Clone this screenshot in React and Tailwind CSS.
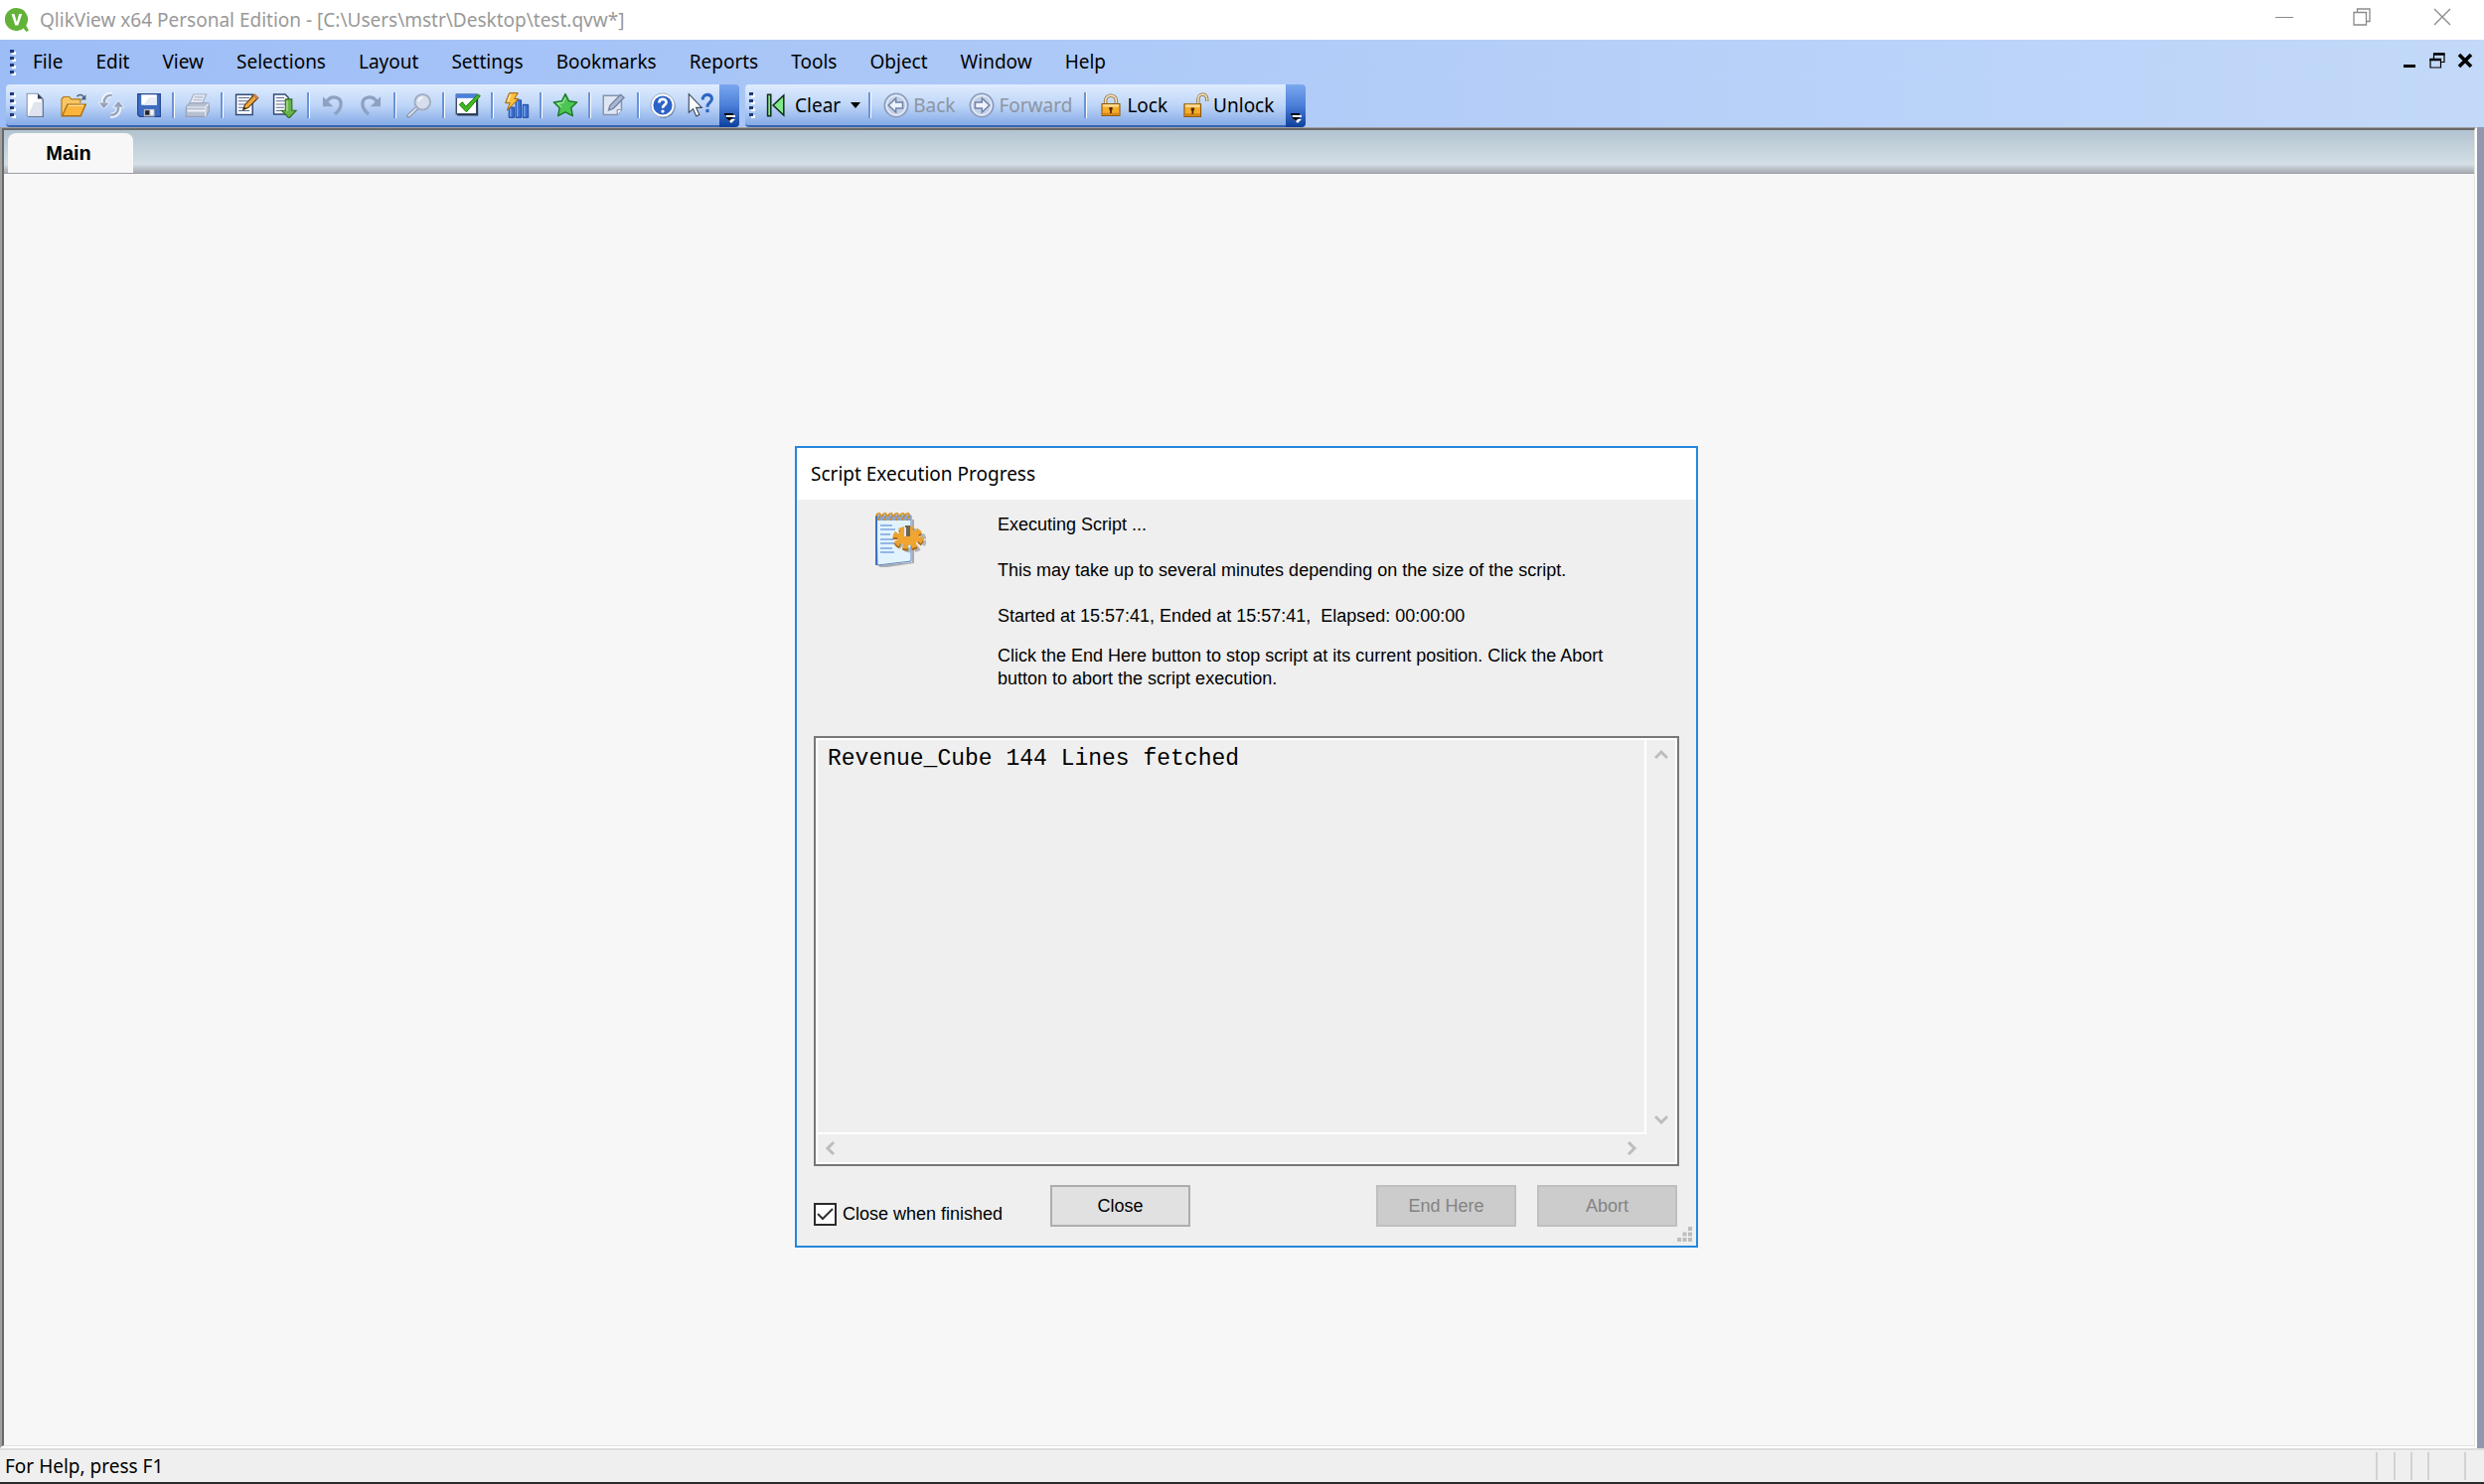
import { useState } from 'react';

const menus = [
  'File', 'Edit', 'View', 'Selections', 'Layout', 'Settings',
  'Bookmarks', 'Reports', 'Tools', 'Object', 'Window', 'Help',
];

function Icon({ children, className = 'w-[26px] h-[26px]' }) {
  return (
    <svg viewBox="0 0 16 16" className={`${className} shrink-0`} fill="none" aria-hidden="true">
      {children}
    </svg>
  );
}

const icons = {
  new: (
    <>
      <path d="M3.2 1h6.3l3.4 3.4V15.4H3.2z" fill="#4b5a78" />
      <path d="M2.6 .8h6.6l3 3V14.8H2.6z" fill="#fff" stroke="#8c9ab5" strokeWidth=".7" />
      <path d="M7 6h5v8.6H3z" fill="#dfe4ee" />
      <path d="M9.2 .8v3.2h3.2z" fill="#2f3c58" />
    </>
  ),
  open: (
    <>
      <path d="M.6 14.4V4.2l1.2-1.4h3.6l1.2 1.4h5.6v2.4" fill="#f7c765" stroke="#b07818" strokeWidth=".7" />
      <path d="M1 14.6 4.2 7.4h11.4l-3.2 7.2z" fill="#fbb53c" stroke="#a86d10" strokeWidth=".8" />
      <path d="M4.8 8.2h9.4" stroke="#ffe3a0" strokeWidth=".8" />
      <path d="M10.2 2.6C11.4 1 13.4 1.2 14.4 3" stroke="#4d6282" strokeWidth="1" />
      <path d="M15.6 1.4v3.2h-3.2z" fill="#4d6282" />
    </>
  ),
  reload: (
    <>
      <path d="M8.4 1.6C5 1 3.4 3.4 3.4 5.8M7.6 14.2c3.4.4 5-2 5-4.6" stroke="#eef3fb" strokeWidth="3.4" />
      <path d="M3.4 10.4 0 6.2h7z M12.4 5 16 9.4H9z" fill="#96a3ba" stroke="#eef3fb" strokeWidth=".6" />
      <path d="M8.4 1.8C5.4 1.6 3.6 3.4 3.6 6.4M7.6 14c3 .2 4.8-1.8 4.8-4.8" stroke="#96a3ba" strokeWidth="1.5" />
    </>
  ),
  save: (
    <>
      <path d="M1 1h14v14H2.2L1 13.8z" fill="#3d6cc0" stroke="#24478f" strokeWidth=".7" />
      <path d="M3.2 1.4h9.6v6.4H3.2z" fill="#fff" />
      <path d="M8 3h4.8v4.8H4.6z" fill="#e6ecf7" />
      <path d="M4.8 10.4h6.6V15H4.8z" fill="#b9bcc4" />
      <path d="M5.6 11.2h2.6V14H5.6z" fill="#1c2438" />
      <path d="M8.8 10.8h2V14h-2z" fill="#f4f4f4" />
    </>
  ),
  print: (
    <>
      <path d="M5.4 1.2h8l-2.6 5.6H3z" fill="#e8ecf4" stroke="#a3aec2" strokeWidth=".7" />
      <path d="M6 3h5.4M5.2 4.8h5.4" stroke="#a9b3c6" strokeWidth=".7" />
      <path d="M.8 9 3 6.6h12v5L13 15H.8z" fill="#b8c1d2" stroke="#94a1b9" strokeWidth=".7" />
      <path d="M1.2 9.2h11.6l2-2.4M12.8 9.2V15" stroke="#eaeff7" strokeWidth=".7" />
      <path d="M1.6 11.4h11" stroke="#f2f5fa" strokeWidth="1.1" />
    </>
  ),
  script: (
    <>
      <path d="M1.6 1.4h10.2v12.4H1.6z" fill="#fff" stroke="#2f4878" strokeWidth=".9" />
      <path d="M3 3.4h7M3 5.4h6M3 7.4h5M3 9.4h4M3 11.4h7" stroke="#56698f" strokeWidth=".7" />
      <path d="M6 10.6 7 7.8 12.8 1.4 15.2 3.4 9 9.6z" fill="#f0a83a" stroke="#573510" strokeWidth=".7" />
      <path d="m12 2.2 2.4 2 1-1L13.4.8z" fill="#c87f45" />
      <path d="m6 10.8.6-1.8 1.3 1.1z" fill="#18120c" />
    </>
  ),
  table: (
    <>
      <path d="M1.6 1.2h7l2 2v10.4h-9z" fill="#fff" stroke="#2f4878" strokeWidth=".9" />
      <path d="M3 3.4h5M3 5.4h6M3 7.4h6M3 9.4h5M3 11.4h5" stroke="#56698f" strokeWidth=".7" />
      <path d="M8.8 4.2h4v7h2.8L11 16 6.4 11.2h2.4z" fill="#66b447" stroke="#356b22" strokeWidth=".7" />
      <path d="M9.8 5v6.6" stroke="#b7e39f" strokeWidth=".8" />
    </>
  ),
  undo: (
    <>
      <path d="M4.4 5.4C7 1.8 13 2.4 13 7.2c0 3-1.6 4.6-3.8 6.4" stroke="#8fa0c0" strokeWidth="2" />
      <path d="M1.8 2.6v6.2h6.4z" fill="#8fa0c0" />
    </>
  ),
  redo: (
    <>
      <path d="M11.6 5.4C9 1.8 3 2.4 3 7.2c0 3 1.6 4.6 3.8 6.4" stroke="#8fa0c0" strokeWidth="2" />
      <path d="M14.2 2.6v6.2H7.8z" fill="#8fa0c0" />
    </>
  ),
  search: (
    <>
      <path d="M6.4 9.8 1.4 14.6" stroke="#8e9bb3" strokeWidth="2.6" strokeLinecap="round" />
      <path d="M6.4 9.8 1.6 14.4" stroke="#dde3ee" strokeWidth="1" strokeLinecap="round" />
      <circle cx="10" cy="6" r="4.8" fill="#d6deec" stroke="#a1adc2" strokeWidth="1.2" />
      <path d="M7.6 5.6c.2-1.6 1.4-2.4 2.6-2.4" stroke="#fff" strokeWidth="1" />
    </>
  ),
  check: (
    <>
      <path d="M.8 1.4h12.6v12H.8z" fill="#fff" stroke="#3f4c66" strokeWidth=".9" />
      <path d="M.6 1h13v2.6H.6z" fill="#4a80dc" />
      <path d="M13.8 3v11H1.4" stroke="#2c3850" strokeWidth=".9" />
      <path d="M2.6 7.6 4.6 6l2 2.8L14.2 1.2l1.4 1-8.6 10z" fill="#41b820" stroke="#1d7a0c" strokeWidth=".6" />
    </>
  ),
  chart: (
    <>
      <path d="M3.2 9.2h3.2v6.4H3.2zM7.4 4.8h3.4v10.8H7.4zM11.8 7.6h3.4v8h-3.4z" fill="#3a6fd0" stroke="#1e479c" strokeWidth=".6" />
      <path d="M4.2 10v5M8.4 5.6v9.4M12.8 8.4v6.6" stroke="#7aa9f0" strokeWidth=".8" />
      <path d="M3.4.4h5.4L6.6 4h2.6L2 11.2l1.8-4.6H1z" fill="#fbbf3a" stroke="#9a5e10" strokeWidth=".6" />
      <path d="M4.2 1.4 2.6 5.6" stroke="#fff0c0" strokeWidth=".8" />
    </>
  ),
  star: (
    <>
      <path d="m8 1 2.2 4.4 5 .7-3.6 3.5.9 5-4.5-2.4-4.5 2.4.9-5L.8 6.1l5-.7z" fill="#4cc552" stroke="#1d7a2c" strokeWidth=".9" strokeLinejoin="round" />
      <path d="M8 3.2 6.6 6.4 3.2 6.9 5.6 9.2" stroke="#a5eaa4" strokeWidth=".7" />
    </>
  ),
  note: (
    <>
      <path d="M1.4 2h11.2v8.8L10 13.8H1.4z" fill="#dfe6f3" stroke="#8494b3" strokeWidth=".9" />
      <path d="M10 13.8v-3h2.6" fill="#fff" stroke="#8494b3" strokeWidth=".7" />
      <path d="m4.6 11 .8-2.8L12 1.4l2.2 1.8-6.6 6.8z" fill="#a9b7cf" stroke="#6f81a5" strokeWidth=".8" />
    </>
  ),
  help: (
    <>
      <circle cx="8.5" cy="8.6" r="7.2" fill="#5a6c8c" />
      <circle cx="8" cy="8" r="7.4" fill="#fff" stroke="#8d9dbb" strokeWidth=".5" />
      <circle cx="8" cy="8" r="5.9" fill="#2d63c8" />
      <path d="M5.8 6.4C5.8 3.4 10.4 3.6 10.2 6.2 10.1 7.8 8 7.8 8 9.7" stroke="#fff" strokeWidth="1.6" />
      <circle cx="8" cy="11.7" r="1" fill="#fff" />
    </>
  ),
  whatsThis: (
    <>
      <path d="M.8 1v11.4l2.6-2.2 2 4.6 1.9-.9-2-4.4h3.5z" fill="#fff" stroke="#3f4b60" strokeWidth=".7" />
      <path d="M9.4 4.6C9.2.4 15.4.6 15 4.2 14.7 6.6 12.3 6.4 12.3 9" stroke="#2f66c4" strokeWidth="1.9" />
      <path d="M11.3 10.4h2v2h-2z" fill="#2f66c4" />
    </>
  ),
  clear: (
    <>
      <path d="M2.8 1.4h2v13.2h-2z" fill="#7fe88a" stroke="#122a16" strokeWidth=".9" />
      <path d="M12.8 1.8v12.4L6.2 8z" fill="#7fe88a" stroke="#122a16" strokeWidth=".9" />
    </>
  ),
  lock: (
    <>
      <path d="M4.4 8V4.8c0-4.4 7.2-4.4 7.2 0V8" stroke="#8a6a3c" strokeWidth="2.3" />
      <path d="M4.4 8V4.8c0-4.4 7.2-4.4 7.2 0V8" stroke="#f0e0bc" strokeWidth="1.2" />
      <path d="M2 7h12v8H2z" fill="#f6ac2c" stroke="#8a5a12" strokeWidth=".7" />
      <path d="M2.6 8.2h10.8" stroke="#ffdc90" strokeWidth="1.6" />
      <path d="M2.4 13.8h11.2" stroke="#d07f10" strokeWidth="1.2" />
      <path d="M6.9 9.4h2.2v1.8h-.5v2.2H7.4v-2.2h-.5z" fill="#4a2c08" />
    </>
  ),
  unlock: (
    <>
      <path d="M9.2 7.6V4.2c0-3.8 5.4-3.8 5.4-.2v1.6" stroke="#8a6a3c" strokeWidth="2" />
      <path d="M9.2 7.6V4.2c0-3.8 5.4-3.8 5.4-.2v1.4" stroke="#f0e0bc" strokeWidth="1" />
      <path d="M.6 7.2h10.2V15H.6z" fill="#f6ac2c" stroke="#8a5a12" strokeWidth=".7" />
      <path d="M1.2 8.4h9" stroke="#ffdc90" strokeWidth="1.6" />
      <path d="M1 13.8h9.4" stroke="#d07f10" strokeWidth="1.2" />
      <path d="M4.7 9.5h2.1v1.7h-.5v2.2H5.2v-2.2h-.5z" fill="#4a2c08" />
    </>
  ),
  back: (
    <>
      <circle cx="8" cy="8" r="7.2" fill="#c3cfe4" stroke="#8b9cbd" strokeWidth="1" />
      <circle cx="8" cy="8" r="6" stroke="#e6edf8" strokeWidth=".8" />
      <path d="M3.2 8 7.8 3.6v2.6h4.2v3.6H7.8v2.6z" fill="#eef3fb" stroke="#6f83aa" strokeWidth=".9" />
    </>
  ),
  forward: (
    <>
      <circle cx="8" cy="8" r="7.2" fill="#c3cfe4" stroke="#8b9cbd" strokeWidth="1" />
      <circle cx="8" cy="8" r="6" stroke="#e6edf8" strokeWidth=".8" />
      <path d="M12.8 8 8.2 3.6v2.6H4v3.6h4.2v2.6z" fill="#eef3fb" stroke="#6f83aa" strokeWidth=".9" />
    </>
  ),
};

// null marks a separator
const tools = [
  ['new', 'New'], ['open', 'Open'], ['reload', 'Reload'], ['save', 'Save'], null,
  ['print', 'Print'], null,
  ['script', 'Edit Script'], ['table', 'Table Viewer'], null,
  ['undo', 'Undo'], ['redo', 'Redo'], null,
  ['search', 'Search'], null,
  ['check', 'Current Selections'], null,
  ['chart', 'Quick Chart'], null,
  ['star', 'Add Bookmark'], null,
  ['note', 'Notes'], null,
  ['help', 'Help Topics'], ['whatsThis', "What's This"],
];

function Grip() {
  return (
    <svg viewBox="0 0 6 26" className="w-1.5 h-[26px] shrink-0" aria-hidden="true">
      {[0, 7, 14, 21].map((y) => (
        <g key={y}>
          <rect x="2" y={y + 2} width="4" height="3" fill="#fff" />
          <rect x="0" y={y} width="4" height="3" fill="#1f3a78" />
        </g>
      ))}
    </svg>
  );
}

function Separator() {
  return (
    <div className="w-[11px] shrink-0 flex justify-center">
      <div className="w-[3px] h-[26px] border-l-2 border-r border-l-[#6a93da] border-r-white" />
    </div>
  );
}

function Overflow() {
  return (
    <button
      aria-label="Toolbar options"
      className="w-5 h-[43px] shrink-0 flex items-end justify-center pb-1 rounded-r-sm bg-linear-to-b from-[#7ba7ee] via-[#4a7ed8] to-[#0c3f9c]"
    >
      <svg viewBox="0 0 12 11" className="w-3 h-[11px]" aria-hidden="true">
        <path d="M3 3h9v2H3zM4 7h8l-4 4z" fill="#fff" />
        <path d="M1 1h9v2H1zM2 5h8L6 9z" fill="#000" />
      </svg>
    </button>
  );
}

function Bar({ children }) {
  return (
    <div className="flex">
      <div className="h-[43px] flex items-center pl-1 rounded-l-sm border-b-2 border-[#3566b4] bg-linear-to-b from-[#dfecfe] via-[#bfd6f8] to-[#86abe6]">
        {children}
      </div>
      <Overflow />
    </div>
  );
}

function Toolbars() {
  return (
    <div className="flex gap-1.5 pl-1.5">
      <Bar>
        <Grip />
        <div className="w-px" />
        {tools.map((tool, i) =>
          tool ? (
            <button key={tool[0]} aria-label={tool[1]} className="w-[38px] h-9 flex items-center justify-center">
              <Icon>{icons[tool[0]]}</Icon>
            </button>
          ) : (
            <Separator key={i} />
          )
        )}
      </Bar>
      <Bar>
        <Grip />
        <button className="h-9 flex items-center gap-1.5 pl-2">
          <Icon>{icons.clear}</Icon>
          Clear
          <svg viewBox="0 0 10 6" className="w-2.5 h-1.5 ml-1" aria-hidden="true">
            <path d="M0 0h10L5 6z" fill="#000" />
          </svg>
        </button>
        <div className="w-1" />
        <Separator />
        <button disabled className="h-9 flex items-center gap-1 pl-2 text-[#8d95a3]">
          <Icon>{icons.back}</Icon>
          Back
        </button>
        <button disabled className="h-9 flex items-center gap-1 pl-3.5 text-[#8d95a3]">
          <Icon>{icons.forward}</Icon>
          Forward
        </button>
        <div className="w-2" />
        <Separator />
        <button className="h-9 flex items-center gap-1 pl-2">
          <Icon className="w-6 h-6">{icons.lock}</Icon>
          Lock
        </button>
        <button className="h-9 flex items-center gap-1 px-4 pr-3">
          <Icon>{icons.unlock}</Icon>
          Unlock
        </button>
      </Bar>
    </div>
  );
}

function TitleBar() {
  return (
    <header className="h-10 flex items-center bg-white text-[#999]">
      <svg viewBox="0 0 24 24" className="w-6 h-6 ml-[5px] shrink-0" aria-hidden="true">
        <path d="M11.5 0a11.5 11.5 0 0 1 9.7 17.7L24 22.4 21.5 24l-2.9-3.6A11.5 11.5 0 1 1 11.5 0z" fill="#62b23a" />
        <path d="M6.5 6h3l2.3 8.2L14.2 6h3l-3.9 11.5h-3z" fill="#fff" />
      </svg>
      <h1 className="ml-[11px] grow whitespace-nowrap">
        QlikView x64 Personal Edition - [C:\Users\mstr\Desktop\test.qvw*]
      </h1>
      <div className="flex h-full pb-1.5">
        <button aria-label="Minimize" className="w-[78px] flex items-center justify-center">
          <svg viewBox="0 0 18 18" className="w-[18px] h-[18px]" stroke="#8a8a8a" fill="none">
            <path d="M0 9.5h18" />
          </svg>
        </button>
        <button aria-label="Restore" className="w-[78px] flex items-center justify-center">
          <svg viewBox="0 0 18 18" className="w-[18px] h-[18px]" stroke="#8a8a8a" fill="none" strokeWidth="1.3">
            <path d="M1 4.5h12.5V17H1zM4.5 4.5V1H17v12.5h-3.5" />
          </svg>
        </button>
        <button aria-label="Close window" className="w-[84px] flex items-center justify-center">
          <svg viewBox="0 0 18 18" className="w-[18px] h-[18px]" stroke="#8a8a8a" fill="none" strokeWidth="1.3">
            <path d="m1 1 16 16M17 1 1 17" />
          </svg>
        </button>
      </div>
    </header>
  );
}

function MenuBar() {
  return (
    <div className="h-[45px] flex items-center pl-2.5 pr-[11px]">
      <Grip />
      <nav className="flex grow gap-px pl-px pb-0.5">
        {menus.map((name) => (
          <button key={name} className="h-9 px-4">
            {name}
          </button>
        ))}
      </nav>
      <div className="flex gap-3 pb-1">
        <button aria-label="Minimize document">
          <svg viewBox="0 0 16 16" className="w-4 h-4">
            <path d="M2 12h12v3H2z" />
          </svg>
        </button>
        <button aria-label="Restore document">
          <svg viewBox="0 0 16 16" className="w-4 h-4" fill="none" stroke="#000">
            <path d="M1 6.5h10.5V15H1zM4.5 6V1H15v8.5h-3.5" strokeWidth="1.2" />
            <path d="M.5 7h11.5M4 1.5h11.5" strokeWidth="2.5" />
          </svg>
        </button>
        <button aria-label="Close document">
          <svg viewBox="0 0 16 16" className="w-4 h-4" fill="none" stroke="#000" strokeWidth="3.6">
            <path d="m2 2 12 12M14 2 2 14" />
          </svg>
        </button>
      </div>
    </div>
  );
}

function NotepadIcon() {
  return (
    <svg viewBox="0 0 52 56" className="w-[52px] h-14" fill="none" aria-hidden="true">
      <path d="M4 54 38 51V8h2v44L6 57z" fill="#a8adb5" />
      <path d="M2 4h35v46L3 54z" fill="#e2f3fd" stroke="#5f86c0" />
      <path d="M2 4h35v5H2z" fill="#8ba3cf" />
      <path d="M2 4v50" stroke="#3f6fc4" strokeWidth="2" />
      {[4, 10, 16, 22, 28, 33].map((x) => (
        <path key={x} d={`M${x - 2} 5c0-4 5-4 4-1l-2 5`} stroke="#d08c1c" strokeWidth="1.5" />
      ))}
      <path d="M6 14h12M6 18h15M6 23h10M6 28h13M6 32h15M6 37h12M6 41h14" stroke="#7ba4e0" strokeWidth="1.3" />
      <ellipse cx="37" cy="29" rx="13" ry="10" stroke="#77777f" strokeWidth="5" strokeDasharray="5 4.4" opacity=".5" />
      <ellipse cx="34" cy="28" rx="13" ry="9" stroke="#a8640e" strokeWidth="5" strokeDasharray="5.4 3.2" />
      <ellipse cx="34" cy="26" rx="13" ry="9" stroke="#eaa230" strokeWidth="5" strokeDasharray="5.4 3.2" />
      <ellipse cx="34" cy="26" rx="11" ry="8" fill="#efa530" />
      <path d="M31 14h5v11h-5z" fill="#6b6459" />
      <path d="M30 16h2v9h-2z" fill="#e8e8e8" />
    </svg>
  );
}

function Arrow({ label, d }) {
  return (
    <button disabled aria-label={label} className="w-[26px] h-[26px] flex items-center justify-center">
      <svg viewBox="0 0 14 14" className="w-3.5 h-3.5" fill="none" stroke="#bdbdbd" strokeWidth="3">
        <path d={d} />
      </svg>
    </button>
  );
}

function ScriptDialog() {
  const [autoClose, setAutoClose] = useState(true);
  return (
    <section
      role="dialog"
      aria-labelledby="dlg-title"
      className="absolute left-[796px] top-[318px] w-[909px] flex flex-col border-2 border-[#2587dc] bg-[#efefef] font-['Liberation_Sans',Arial,sans-serif] text-[18px] leading-[23px] text-black"
    >
      <h2 id="dlg-title" className="h-[52px] pl-3.5 flex items-center bg-white font-['Noto_Sans','Open_Sans',sans-serif] text-[19px]">
        Script Execution Progress
      </h2>
      <div className="h-[238px] flex">
        <div className="w-[202px] shrink-0 pl-[78px] pt-3">
          <NotepadIcon />
        </div>
        <div className="pt-3.5">
          <p>Executing Script ...</p>
          <p className="mt-[23px]">This may take up to several minutes depending on the size of the script.</p>
          <p className="mt-[23px] whitespace-pre">Started at 15:57:41, Ended at 15:57:41,  Elapsed: 00:00:00</p>
          <p className="mt-[17px] w-[650px]">
            Click the End Here button to stop script at its current position. Click the Abort
            <br />
            button to abort the script execution.
          </p>
        </div>
      </div>
      <div className="h-[433px] mx-[17px] p-0.5 border-2 border-[#777] bg-white grid grid-cols-[1fr_29px] grid-rows-[1fr_28px]">
        <textarea
          readOnly
          aria-label="Script log"
          value="Revenue_Cube 144 Lines fetched"
          className="resize-none outline-none overflow-hidden bg-[#efefef] border-r-2 border-b-2 border-white pl-2.5 pt-1.5 font-['Liberation_Mono',monospace] text-[23px] leading-[26px]"
        />
        <div className="bg-[#efefef] flex flex-col items-center justify-between py-0.5">
          <Arrow label="Scroll up" d="m1 10 6-6 6 6" />
          <Arrow label="Scroll down" d="m1 4 6 6 6-6" />
        </div>
        <div className="bg-[#efefef] flex items-center justify-between pr-0.5">
          <Arrow label="Scroll left" d="M10 1 4 7l6 6" />
          <Arrow label="Scroll right" d="m4 1 6 6-6 6" />
        </div>
        <div className="bg-[#efefef]" />
      </div>
      <div className="h-20 pt-[19px] pl-[17px] pr-[19px] flex">
        <div className="flex items-center gap-1.5 h-[58px] w-[238px]">
          <span className="relative w-[23px] h-[23px]">
            <input
              id="auto-close"
              type="checkbox"
              checked={autoClose}
              onChange={(e) => setAutoClose(e.target.checked)}
              className="peer appearance-none block w-[23px] h-[23px] border-2 border-[#2b2b2b] bg-white"
            />
            <svg
              viewBox="0 0 23 23"
              className="absolute inset-0 hidden peer-checked:block pointer-events-none"
              fill="none"
              stroke="#333"
              strokeWidth="2"
            >
              <path d="m4 11 5 5L19 6" />
            </svg>
          </span>
          <label htmlFor="auto-close">Close when finished</label>
        </div>
        <button className="w-[141px] h-[42px] border-2 border-[#adadad] bg-[#e1e1e1]">Close</button>
        <div className="grow" />
        <button disabled className="w-[141px] h-[42px] mr-[21px] border-2 border-[#bfbfbf] bg-[#ccc] text-[#838383]">
          End Here
        </button>
        <button disabled className="w-[141px] h-[42px] border-2 border-[#bfbfbf] bg-[#ccc] text-[#838383]">
          Abort
        </button>
      </div>
      <svg viewBox="0 0 15 15" className="absolute right-1 bottom-1 w-[15px] h-[15px]" fill="#bdbdbd" aria-hidden="true">
        <path d="M11 0h4v4h-4zM11 5.5h4v4h-4zM5.5 5.5h4v4h-4zM11 11h4v4h-4zM5.5 11h4v4h-4zM0 11h4v4H0z" />
      </svg>
    </section>
  );
}

export default function App() {
  return (
    <div className="min-h-screen flex flex-col bg-[#efefef] font-['Noto_Sans','Open_Sans',sans-serif] text-[19px] leading-6 text-black">
      <TitleBar />
      <div className="bg-linear-to-r from-[#9dbdf6] to-[#c3d9f9]">
        <MenuBar />
        <Toolbars />
      </div>
      <main className="grow flex bg-[#9198ae] pr-[7px]">
        <div className="grow flex border-r-2 border-b-2 border-l-2 border-r-white border-b-white border-l-[#a0a0a0] border-t border-t-[#a0a0a0]">
          <div className="relative grow flex flex-col border-t-2 border-l-2 border-r border-b border-t-[#696969] border-l-[#696969] border-r-[#e3e3e3] border-b-[#e3e3e3] bg-[#f7f7f7]">
            <div className="h-11 flex items-end pl-1 border-b border-[#9a9fa8] bg-linear-to-b from-[#b2c4d0] via-[#d3dee5] via-80% to-[#a8aab2]">
              <button className="w-[126px] h-10 pr-1 rounded-t-lg bg-[#f7f7f7] font-['Liberation_Sans',Arial,sans-serif] font-bold text-[20px]">
                Main
              </button>
            </div>
            <ScriptDialog />
          </div>
        </div>
      </main>
      <footer className="h-9 flex border-t-2 border-t-[#dcdcdc] border-b-2 border-b-[#2b2b2b] bg-[#efefef]">
        <p className="grow pl-[5px] pt-1">For Help, press F1</p>
        <div className="flex py-0.5 pr-[18px]">
          <div className="w-[18px] border-l-2 border-[#d2d2d2]" />
          <div className="w-[17px] border-l-2 border-[#d2d2d2]" />
          <div className="w-[17px] border-l-2 border-[#d2d2d2]" />
          <div className="w-[39px] border-x-2 border-[#d2d2d2]" />
        </div>
      </footer>
    </div>
  );
}
